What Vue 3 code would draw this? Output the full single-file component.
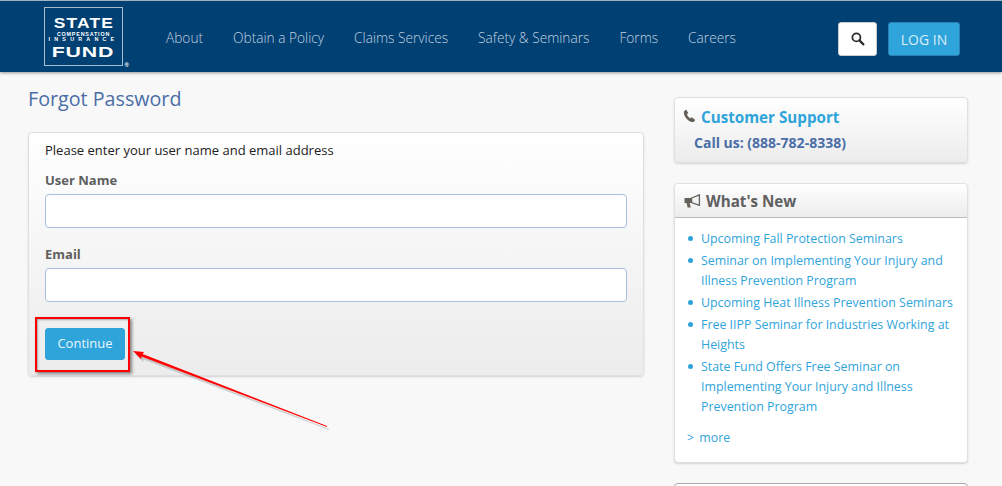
<template>
  <div class="page">
    <header class="topbar">
      <a class="logo">
        <span class="logo-state">STATE</span>
        <span class="logo-small">COMPENSATION</span>
        <span class="logo-small wide">INSURANCE</span>
        <span class="logo-fund">FUND</span>
        <span class="logo-reg">®</span>
      </a>
      <nav class="nav">
        <a v-for="item in navItems" :key="item">{{ item }}</a>
      </nav>
      <button class="search-btn" aria-label="Search">
        <svg width="14" height="14" viewBox="0 0 14 14">
          <circle cx="5.4" cy="5.4" r="4" fill="none" stroke="#2b2b2b" stroke-width="1.8" />
          <path d="M8.4 8.4 L12.4 12.4" stroke="#2b2b2b" stroke-width="2.2" stroke-linecap="round" />
        </svg>
      </button>
      <button class="login-btn">LOG IN</button>
    </header>

    <main class="content">
      <section class="left">
        <h1>Forgot Password</h1>
        <form class="panel form-panel" @submit.prevent>
          <p class="intro">Please enter your user name and email address</p>
          <label for="username">User Name</label>
          <input id="username" type="text" />
          <label for="email">Email</label>
          <input id="email" type="text" />
          <button class="continue">Continue</button>
        </form>
      </section>

      <aside class="right">
        <div class="panel support">
          <h3>
            <svg class="phone" width="13" height="14" viewBox="0 0 13 14">
              <path d="M.8 2.4 L3.2 .4 L5.2 3.9 L4 5.2 C4.4 6.8 5.6 8.4 7.2 9.3 L8.7 8.2 L12.3 10.9 L10.6 13 C6.4 13.6 .4 8 .8 2.4 Z" fill="#66605a" />
            </svg>
            <span>Customer Support</span>
          </h3>
          <p class="call">Call us: (888-782-8338)</p>
        </div>

        <div class="panel news">
          <div class="news-head">
            <svg width="17" height="14" viewBox="0 0 17 14">
              <path d="M.5 4 H7 V9 H5.6 L6.8 13.4 H3.6 L2.6 9 H.5 Z" fill="#66605a" />
              <path d="M7.6 4 L15.4 .8 V11.4 L7.6 8.6 Z" fill="#f4f4f4" stroke="#66605a" stroke-width="1.3" />
            </svg>
            <span>What's New</span>
          </div>
          <div class="news-body">
            <ul>
              <li v-for="link in newsItems" :key="link">{{ link }}</li>
            </ul>
            <a class="more">&gt; more</a>
          </div>
        </div>

        <div class="panel next"></div>
      </aside>
    </main>

    <!-- annotation drawn over the screenshot -->
    <div class="red-box"></div>
    <svg class="arrow" width="210" height="90" viewBox="0 0 210 90">
      <g transform="translate(2 3)" fill="#555" opacity=".25">
        <path d="M3 3 L14 4 L12.6 6 L197 78 L197 79 L11.6 8.4 L11 11 Z" />
      </g>
      <path d="M3 3 L14 4 L12.6 6 L197 78 L197 79 L11.6 8.4 L11 11 Z" fill="#f00" />
    </svg>
  </div>
</template>

<script setup>
const navItems = ["About", "Obtain a Policy", "Claims Services", "Safety & Seminars", "Forms", "Careers"]

const newsItems = [
  "Upcoming Fall Protection Seminars",
  "Seminar on Implementing Your Injury and Illness Prevention Program",
  "Upcoming Heat Illness Prevention Seminars",
  "Free IIPP Seminar for Industries Working at Heights",
  "State Fund Offers Free Seminar on Implementing Your Injury and Illness Prevention Program"
]
</script>

<style>
html,
body {
  margin: 0;
  background: #f8f8f8;
}
</style>

<style scoped>
.page {
  position: relative;
  width: 1002px;
  height: 486px;
  overflow: hidden;
  background: #f8f8f8;
  font-family: "Open Sans", "Liberation Sans", sans-serif;
  font-size: 13px;
  color: #333;
}

.topbar {
  box-sizing: border-box;
  display: flex;
  align-items: flex-start;
  height: 72px;
  padding-left: 44px;
  background: #004073;
  border-top: 1px solid #9fb2c4;
  box-shadow: 0 1px 3px rgba(0, 0, 0, 0.4);
}

.logo {
  position: relative;
  box-sizing: border-box;
  display: flex;
  flex-direction: column;
  align-items: center;
  width: 79px;
  height: 59px;
  margin-top: 6px;
  padding-top: 7px;
  border: 1px solid #a9bccd;
  color: #fff;
  font-family: "Liberation Sans", sans-serif;
  font-weight: bold;
  line-height: 1;
}

.logo-state {
  font-size: 15px;
  letter-spacing: 1px;
  transform: scaleX(1.16);
}

.logo-small {
  margin-top: 2px;
  font-size: 5.4px;
  letter-spacing: 0.8px;
  white-space: nowrap;
}

.logo-small.wide {
  margin-top: 0;
  letter-spacing: 4.2px;
}

.logo-fund {
  margin-top: 1px;
  font-size: 15px;
  letter-spacing: 0.6px;
  transform: scaleX(1.42);
}

.logo-reg {
  position: absolute;
  right: -7px;
  bottom: -3px;
  font-size: 6px;
}

.nav {
  display: flex;
  gap: 30px;
  margin-left: 43px;
  padding-top: 27px;
  line-height: 19px;
}

.nav a {
  color: #c3d2e0;
  font-size: 13.7px;
  font-weight: 300;
}

.search-btn {
  display: flex;
  align-items: center;
  justify-content: center;
  box-sizing: border-box;
  width: 39px;
  height: 34px;
  margin: 21px 0 0 auto;
  padding: 0;
  background: #fff;
  border: 1px solid #ccc;
  border-radius: 3px;
}

.login-btn {
  box-sizing: border-box;
  width: 72px;
  height: 34px;
  margin: 21px 42px 0 11px;
  padding: 0;
  background: #2fa4db;
  border: 1px solid #2a80b4;
  border-radius: 3px;
  color: #d8eefa;
  font-family: inherit;
  font-size: 14px;
}

.content {
  display: flex;
  align-items: flex-start;
  padding-left: 28px;
}

.left {
  width: 616px;
}

h1 {
  margin: 13px 0 19px;
  color: #4a6da7;
  font-size: 19.7px;
  font-weight: 400;
  line-height: 28px;
}

.panel {
  box-sizing: border-box;
  background: linear-gradient(#fff, #ececec);
  border: 1px solid #e0e0e0;
  border-radius: 4px;
  box-shadow: 0 1px 2px rgba(0, 0, 0, 0.15);
}

.form-panel {
  display: flex;
  flex-direction: column;
  align-items: flex-start;
  height: 244px;
  padding: 8px 16px 0;
}

.intro {
  margin: 0;
  color: #222;
  font-size: 13px;
  line-height: 18px;
}

label {
  margin-top: 12px;
  color: #5f5f5f;
  font-size: 13px;
  font-weight: 700;
  line-height: 18px;
}

input {
  box-sizing: border-box;
  width: 582px;
  height: 34px;
  margin-top: 5px;
  margin-bottom: 5px;
  background: #fff;
  border: 1px solid #a9bde4;
  border-radius: 4px;
}

.continue {
  width: 80px;
  height: 32px;
  margin-top: 21px;
  padding: 0 0 2px;
  background: #2fa4db;
  border: 1px solid #2fa4db;
  border-radius: 3px;
  color: #e8f5fc;
  font-family: inherit;
  font-size: 13px;
}

.right {
  width: 294px;
  margin-left: 30px;
  padding-top: 25px;
}

.support {
  height: 66px;
  padding: 9px 9px 0;
}

.support h3 {
  display: flex;
  align-items: center;
  gap: 5px;
  margin: 0;
  color: #2fa4db;
  font-size: 15.2px;
  font-weight: 700;
  line-height: 20px;
}

.phone {
  margin: -2px 0 0 -1px;
}

.call {
  margin: 7px 0 0 10px;
  color: #4a6da7;
  font-size: 14px;
  font-weight: 700;
  line-height: 18px;
}

.news {
  height: 280px;
  margin-top: 20px;
  background: #fff;
}

.news-head {
  display: flex;
  align-items: center;
  gap: 5px;
  box-sizing: border-box;
  height: 34px;
  padding-left: 9px;
  background: linear-gradient(#fff, #ececec);
  border-bottom: 1px solid #bbb;
  border-radius: 4px 4px 0 0;
  color: #5f5f5f;
  font-size: 15.2px;
  font-weight: 700;
}

.news-body {
  padding: 11px 12px 0;
}

ul {
  margin: 0;
  padding: 0;
  list-style: none;
}

li {
  position: relative;
  padding-left: 14px;
  color: #2fa4db;
  font-size: 12.4px;
  line-height: 20px;
  margin-bottom: 2px;
}

li::before {
  content: "";
  position: absolute;
  left: 1px;
  top: 7px;
  width: 5px;
  height: 5px;
  border-radius: 50%;
  background: #2fa4db;
}

.more {
  display: block;
  margin-top: 11px;
  color: #2fa4db;
  font-size: 12.4px;
  line-height: 20px;
  word-spacing: 2px;
}

.next {
  height: 40px;
  margin-top: 20px;
  background: #fff;
  border-color: #aaa;
}

.red-box {
  position: absolute;
  left: 35px;
  top: 317px;
  box-sizing: border-box;
  width: 95px;
  height: 55px;
  border: 2px solid #f00;
  box-shadow: 2px 2px 3px rgba(0, 0, 0, 0.45), inset 1px 1px 2px rgba(0, 0, 0, 0.3);
}

.arrow {
  position: absolute;
  left: 130px;
  top: 348px;
}
</style>
